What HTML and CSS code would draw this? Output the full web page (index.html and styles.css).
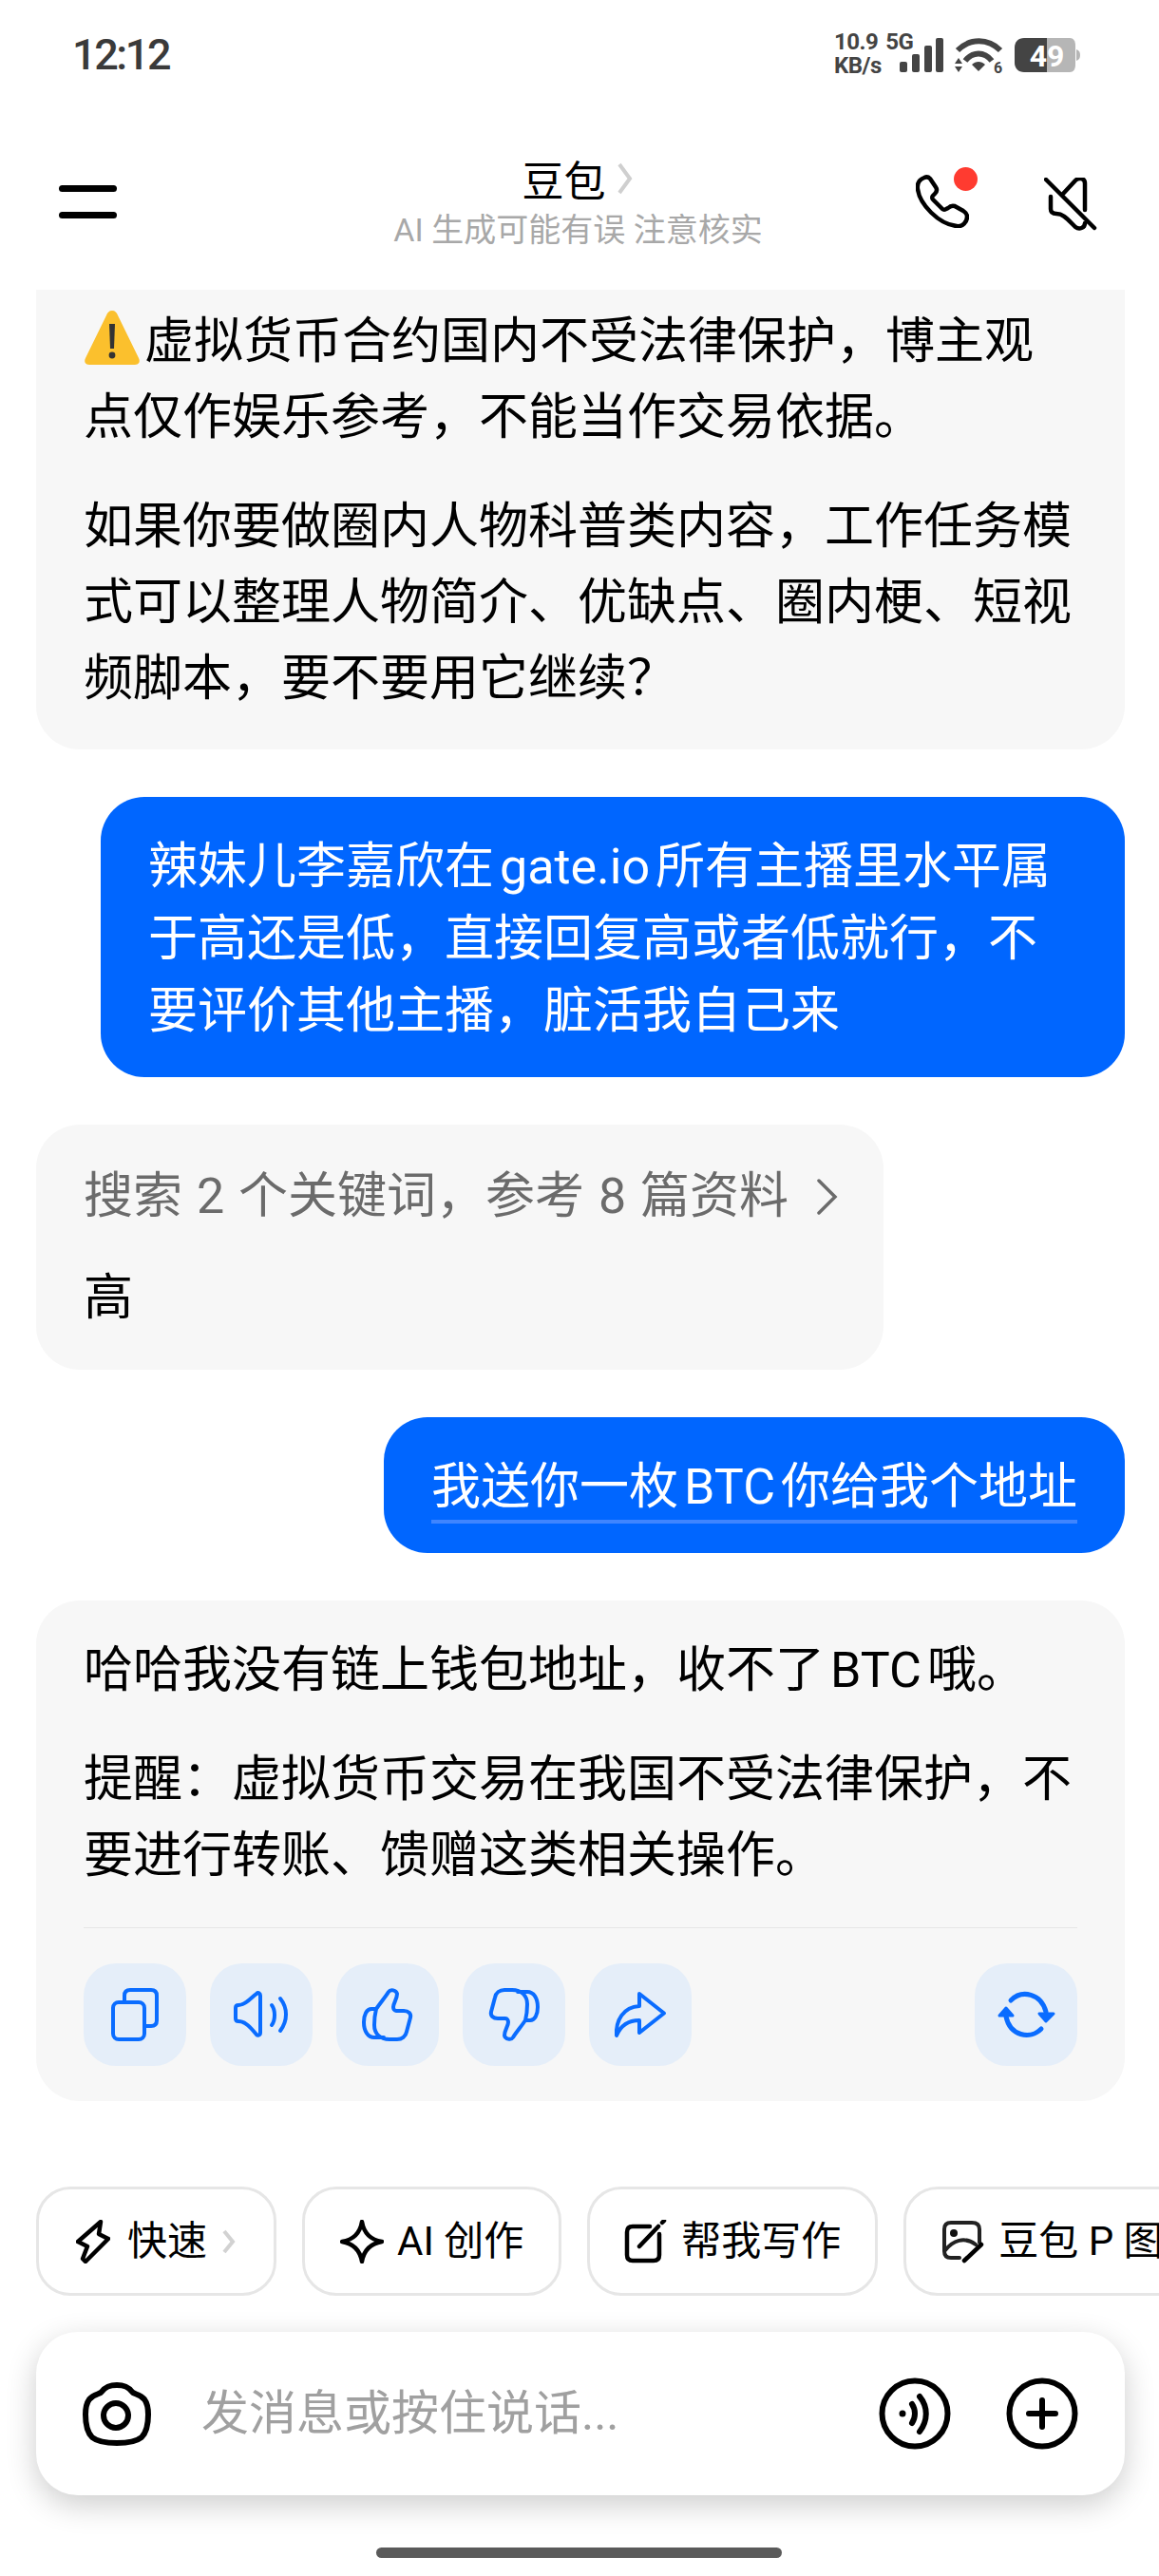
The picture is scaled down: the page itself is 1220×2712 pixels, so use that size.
FILE: index.html
```html
<!DOCTYPE html>
<html lang="zh-CN">
<head>
<meta charset="utf-8">
<title>豆包</title>
<link rel="stylesheet" href="styles.css">
</head>
<body>
<div class="phone">
  <div class="status">
    <div class="time">12:12</div>
    <div class="sys">
      <div class="net">
        <div class="net-top"><span>10.9</span><span>5G</span></div>
        <div>KB/s</div>
      </div>
      <svg class="signal" width="46" height="36" viewBox="0 0 46 36"><rect x="0" y="25" width="8" height="11" rx="2"/><rect x="13" y="17" width="8" height="19" rx="2"/><rect x="26" y="8" width="8" height="28" rx="2"/><rect x="38" y="0" width="8" height="36" rx="2"/></svg>
      <svg class="wifi" width="56" height="42" viewBox="0 0 56 42"><path d="M3 13C16 0 35 0 48 13" class="wf"/><path d="M11 24C19 14 31 14 39 24" class="wf"/><path d="M18 28C22 24 28 24 32 28L25 35Z"/><path d="M4 21L0 27H8Z"/><path d="M0 30H8L4 36Z"/><text x="41" y="37" class="wifi-six">6</text></svg>
      <svg class="battery" width="69" height="36" viewBox="0 0 69 36"><path d="M34 0H58C62 0 64 3 64 8V28C64 33 62 36 58 36H34Z" fill="#b6b6b6"/><path d="M65 12C68 13 69 15 69 18C69 21 68 23 65 24Z" fill="#b6b6b6"/><path d="M34 0H10C4 0 0 4 0 10V26C0 32 4 36 10 36H34Z" fill="#444"/><text x="34" y="30" class="batt-text">49</text></svg>
    </div>
  </div>

  <header class="head">
    <div class="menu"><span></span><span></span></div>
    <div class="title-block">
      <div class="title"><span>豆包</span><svg width="18" height="36" viewBox="0 0 18 36"><path d="M3 3L14 18L3 33" fill="none" stroke="#cfcfcf" stroke-width="4"/></svg></div>
      <div class="sub">AI 生成可能有误 注意核实</div>
    </div>
    <div class="actions">
      <div class="call">
        <svg width="56" height="56" viewBox="0 0 56 56"><path class="ink" d="M9 3C4 5 1 9 2 15C4 31 24 52 43 54C49 55 54 50 54 44C54 41 53 40 50 38L41 33C38 32 36 33 34 35L32 36C31 37 29 37 28 36L18 26C17 25 17 23 18 22L20 20C22 18 23 16 21 13L15 4C13 2 11 2 9 3Z"/></svg>
        <i class="dot"></i>
      </div>
      <svg class="mute" width="56" height="56" viewBox="0 0 56 56"><path class="ink" d="M2 2L53 53M20 17L33 3C36 0 43 0 43 6V34M7 20V33C7 36 9 38 13 38C20 38 24 43 33 52C37 55 43 53 43 48"/></svg>
    </div>
  </header>

  <main class="chat">
    <section class="bubble bot first">
      <p><svg class="warn" width="60" height="60" viewBox="0 0 60 60"><path d="M30 2C27 2 25 4 24 7L2 52C0 56 2 59 6 59H54C58 59 60 56 58 52L36 7C35 4 33 2 30 2Z" fill="#fbc02d"/><path d="M27 16H33L32 42H28Z" fill="#333"/><circle cx="30" cy="49" r="3.4" fill="#333"/></svg>虚拟货币合约国内不受法律保护，博主观点仅作娱乐参考，不能当作交易依据。</p>
      <p>如果你要做圈内人物科普类内容，工作任务模式可以整理人物简介、优缺点、圈内梗、短视频脚本，要不要用它继续？</p>
    </section>

    <section class="bubble me wide">
      <p>辣妹儿李嘉欣在<span class="lat">gate.io</span>所有主播里水平属于高还是低，直接回复高或者低就行，不要评价其他主播，脏活我自己来</p>
    </section>

    <section class="bubble bot search">
      <div class="search-row"><span>搜索 2 个关键词，参考 8 篇资料</span><svg width="24" height="40" viewBox="0 0 24 40"><path d="M3 3L20 20L3 37" fill="none" stroke="#6b6b6b" stroke-width="3.5" stroke-linecap="round"/></svg></div>
      <p>高</p>
    </section>

    <section class="bubble me">
      <p><span class="under">我送你一枚<span class="lat">BTC</span>你给我个地址</span></p>
    </section>

    <section class="bubble bot answer">
      <p>哈哈我没有链上钱包地址，收不了<span class="lat">BTC</span>哦。</p>
      <p>提醒：虚拟货币交易在我国不受法律保护，不要进行转账、馈赠这类相关操作。</p>
      <div class="divider"></div>
      <div class="tools">
        <div class="tool"><svg viewBox="0 0 108 108" width="108" height="108"><path class="bl" d="M43 41V34C43 30 45 28 49 28H71C75 28 77 30 77 34V60C77 64 75 66 71 66H64"/><rect class="bl" x="31" y="41" width="33" height="39" rx="6"/></svg></div>
        <div class="tool"><svg viewBox="0 0 108 108" width="108" height="108"><path class="bl" d="M27 47C27 45 28 44 30 44C38 44 44 35 49 32C51 30 53 32 53 34V73C53 76 50 76 49 75C44 69 38 61 30 61C28 61 27 60 27 58Z"/><path class="bl" d="M65 44C69 49 69 60 65 65M74 37C82 47 82 60 74 71"/></svg></div>
        <div class="tool"><svg viewBox="0 0 108 108" width="108" height="108"><path class="bl" d="M42 48C46 42 52 35 55 30C57 27 63 28 64 32C64 38 60 42 60 46C60 48 61 50 63 50H71C76 50 79 53 78 57L74 72C73 77 69 80 64 80H56C46 80 40 74 40 65C40 58 41 52 42 48ZM42 48H37C32 48 29 54 29 62C29 71 33 78 40 78H50"/></svg></div>
        <div class="tool"><svg viewBox="0 0 108 108" width="108" height="108"><path class="bl" transform="rotate(180 54 54)" d="M42 48C46 42 52 35 55 30C57 27 63 28 64 32C64 38 60 42 60 46C60 48 61 50 63 50H71C76 50 79 53 78 57L74 72C73 77 69 80 64 80H56C46 80 40 74 40 65C40 58 41 52 42 48ZM42 48H37C32 48 29 54 29 62C29 71 33 78 40 78H50"/></svg></div>
        <div class="tool"><svg viewBox="0 0 108 108" width="108" height="108"><path class="bl" d="M53 32L79 52.5L53 73V60C42 60 34 64 29 76C28 60 36 46 53 45Z"/></svg></div>
        <div class="tool regen"><svg viewBox="0 0 108 108" width="108" height="108"><path class="bl thick" d="M38 39C50 27 70 32 75 51M70 69C58 81 37 76 33 56"/><path d="M68 53H83L75 61Z" class="blf"/><path d="M26 55H40L33 47Z" class="blf"/></svg></div>
      </div>
    </section>
  </main>

  <nav class="chips">
    <div class="chip first-chip"><svg width="36" height="46" viewBox="0 0 36 46"><path class="ink" d="M26 2L24 15L34 20L10 44L7 41L12 28L2 23Z"/></svg><span>快速</span><svg class="mini" width="14" height="26" viewBox="0 0 14 26"><path d="M2 2L11 13L2 24" fill="none" stroke="#d2d2d2" stroke-width="4"/></svg></div>
    <div class="chip"><svg width="46" height="46" viewBox="0 0 46 46"><path class="ink" d="M23 2C25 14 32 21 44 23C32 25 25 32 23 44C21 32 14 25 2 23C14 21 21 14 23 2Z"/></svg><span>AI 创作</span></div>
    <div class="chip tight"><svg width="46" height="46" viewBox="0 0 46 46"><path class="ink" d="M27 7H9C5 7 3 9 3 13V37C3 41 5 43 9 43H31C35 43 37 41 37 37V15"/><path class="ink" d="M16 28L36 7M40 3L42 1"/></svg><span>帮我写作</span></div>
    <div class="chip"><svg width="46" height="46" viewBox="0 0 46 46"><path class="ink thin" d="M19 40H10C6 40 3 38 3 33V10C3 5 6 3 10 3H32C37 3 40 5 40 10V24"/><circle cx="13" cy="14" r="4" fill="#111"/><path class="ink thin" d="M4 32C12 22 24 17 36 26"/><path class="ink" d="M24 43L42 26"/></svg><span>豆包 P 图</span></div>
  </nav>

  <div class="composer">
    <svg class="cam" width="72" height="67" viewBox="0 0 72 67"><path class="ink fat" d="M20 10C24 5 28 3 36 3C44 3 48 5 52 10C54 13 60 12 65 18C68 22 69 27 69 34C69 44 67 53 62 58C56 63 46 64 36 64C26 64 16 63 10 58C5 53 3 44 3 34C3 27 4 22 7 18C12 12 18 13 20 10Z"/><circle class="ink fat" cx="35" cy="35" r="13"/></svg>
    <span class="ph">发消息或按住说话...</span>
    <svg width="76" height="76" viewBox="0 0 76 76"><circle class="ink fat" cx="38" cy="38" r="34.500"/><circle cx="25" cy="38" r="3.500" fill="#000"/><path class="ink fat" d="M35 28C39 34 39 42 35 48M43 20C52 31 52 45 43 57"/></svg>
    <svg class="plus" width="76" height="76" viewBox="0 0 76 76"><circle class="ink fat" cx="38" cy="38" r="34.500"/><path class="ink fat" d="M38 24V52M24 38H52"/></svg>
  </div>
  <div class="home"></div>
</div>
</body>
</html>
```
FILE: styles.css
```css
* { box-sizing: border-box; }
html, body { margin: 0; padding: 0; background: #fff; }
body { font-family: Roboto, "Noto Sans CJK SC", sans-serif; color: #000; }
svg { display: block; flex: none; }
.phone { width: 1220px; height: 2712px; overflow: hidden; display: flex; flex-direction: column; background: #fff; }

.status { height: 120px; flex: none; display: flex; justify-content: space-between; padding: 37px 83px 0 76px; }
.time { font-size: 45px; font-weight: 500; letter-spacing: -2.4px; line-height: 42px; color: #3a3a3a; }
.sys { display: flex; align-items: flex-start; height: 42px; padding-top: 3px; }
.net { font-size: 24px; font-weight: 700; line-height: 25px; color: #444; width: 81px; margin-top: -8px; letter-spacing: -.5px; }
.net-top { display: flex; gap: 8px; }
.signal { fill: #444; margin-left: -12px; }
.wifi { fill: #444; margin-left: 12px; margin-right: -5px; }
.wf { fill: none; stroke: #444; stroke-width: 6; }
.wifi-six { font: 700 16px Roboto, sans-serif; fill: #444; }
.battery { margin-left: 12px; overflow: visible; }
.batt-text { font: 700 32px Roboto, sans-serif; fill: #fff; text-anchor: middle; }

.head { height: 185px; flex: none; display: grid; grid-template-columns: 1fr auto 1fr; padding: 0 65px 0 62px; }
.menu { display: flex; flex-direction: column; gap: 21px; padding-top: 75px; }
.menu span { width: 61px; height: 7px; border-radius: 4px; background: #000; }
.title-block { display: flex; flex-direction: column; align-items: center; padding-top: 41px; }
.title { display: flex; align-items: center; gap: 12px; height: 54px; font-size: 44px; }
.sub { height: 54px; line-height: 54px; font-size: 34px; color: #a8a8a8; }
.actions { display: flex; justify-content: flex-end; align-items: flex-start; gap: 79px; padding-top: 64px; }
.call { position: relative; }
.dot { position: absolute; left: 40px; top: -8px; width: 25px; height: 25px; border-radius: 50%; background: #ff3b30; }
.mute { margin-top: 3px; }
.ink { fill: none; stroke: #000; stroke-width: 4.5; stroke-linecap: round; stroke-linejoin: round; }
.ink.thin { stroke: #222; stroke-width: 4; }
.ink.fat { stroke-width: 6; }

.chat { flex: none; display: flex; flex-direction: column; align-items: flex-start; gap: 50px; padding: 0 36px 0 38px; }
.bubble { border-radius: 46px; font-size: 52px; line-height: 80px; }
.bubble p { margin: 0; }
.bubble p + p { margin-top: 35px; }
.bot { background: #f7f7f7; padding: 34px 50px 35px; width: 1146px; }
.bot.first { padding: 15px 50px 34px; border-radius: 0 0 46px 46px; }
.bot.answer { padding-bottom: 37px; }
.warn { display: inline-block; vertical-align: -8px; margin-right: 4px; }
.me { background: #0066ff; color: #fff; align-self: flex-end; line-height: 76px; padding: 36px 50px 31px 50px; }
.me.wide { width: 1078px; }
.lat { margin: 0 6px; }
.under { display: inline-block; border-bottom: 4px solid #3f85ff; line-height: 68px; padding-bottom: 0; }
.search { width: 892px; padding: 36px 50px 35px; }
.search-row { display: flex; justify-content: space-between; align-items: center; color: #6b6b6b; height: 80px; margin-bottom: 27px; word-spacing: 2px; margin-right: -3px; }
.divider { height: 1px; background: #e6e6e6; margin-top: 35px; }
.tools { display: flex; gap: 25px; margin-top: 37px; }
.tool { width: 108px; height: 108px; border-radius: 34px; background: #e5eef9; }
.regen { margin-left: auto; margin-right: 0; }
.bl { fill: none; stroke: #0a6cff; stroke-width: 4; stroke-linecap: round; stroke-linejoin: round; }
.bl.thick { stroke-width: 5; }
.blf { fill: #0a6cff; stroke: #0a6cff; stroke-width: 3; stroke-linejoin: round; }

.chips { flex: none; display: flex; gap: 27px; margin-top: 90px; padding-left: 38px; height: 115px; overflow: hidden; }
.chip { flex: none; display: flex; align-items: center; gap: 14px; height: 115px; padding: 0 37px; border: 3px solid #e6e6e6; border-radius: 36px; font-size: 42px; line-height: 56px; }
.first-chip { padding: 0 40px 0 39px; gap: 18px; }
.tight { padding: 0 36px; }
.mini { margin-left: -2px; }

.composer { flex: none; margin: 38px 0 0 38px; width: 1146px; height: 172px; border-radius: 44px; background: #fff; box-shadow: 0 10px 32px rgba(0,0,0,.2); display: flex; align-items: center; padding: 0 49px 0 49px; }
.ph { flex: 1; margin-left: 53px; font-size: 50px; color: #a0a0a0; padding-bottom: 10px; }
.plus { margin-left: 58px; }
.home { flex: none; width: 427px; height: 11px; border-radius: 6px; background: #5a5a5a; margin: 55px 0 0 396px; }
```
